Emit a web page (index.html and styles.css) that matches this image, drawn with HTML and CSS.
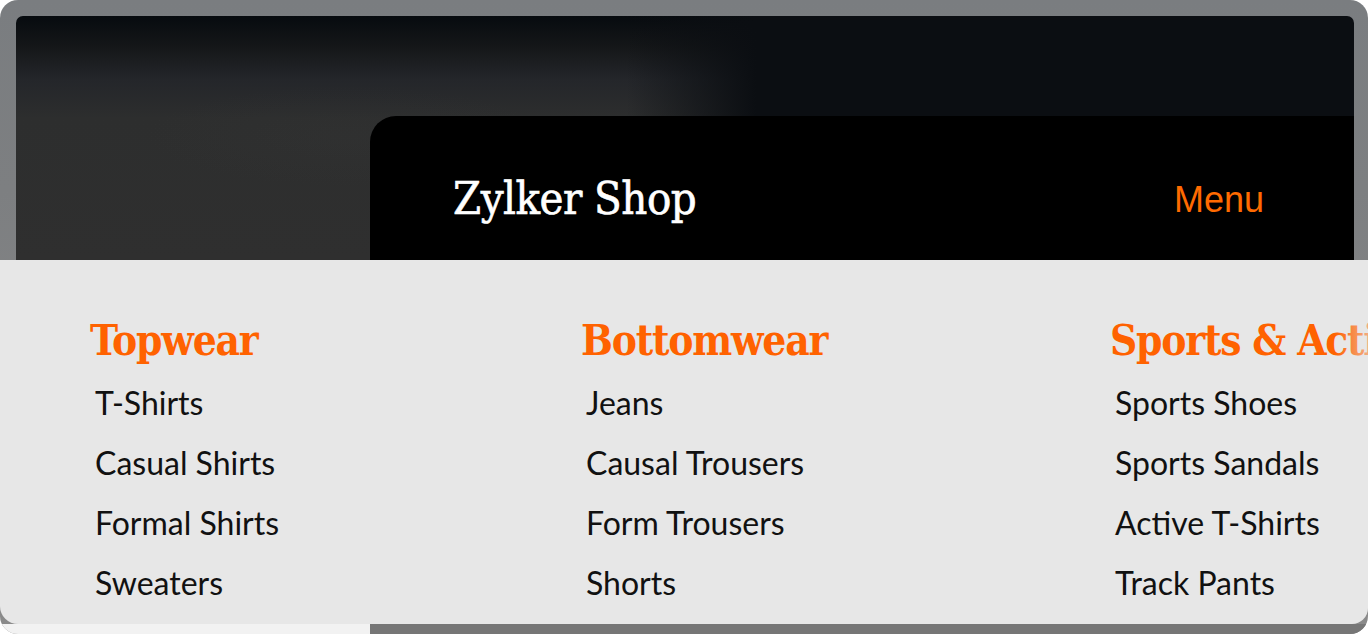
FILE: index.html
```html
<!DOCTYPE html>
<html lang="en">
<head>
<meta charset="utf-8">
<title>Zylker Shop</title>
<link rel="stylesheet" href="styles.css">
</head>
<body>
<div class="frame">
  <div class="hero">
    <header class="bar">
      <h1 class="brand">Zylker Shop</h1>
      <span class="menu">Menu</span>
    </header>
  </div>
  <section class="panel">
    <div class="col">
      <h2 class="cat">Topwear</h2>
      <ul class="items">
        <li>T-Shirts</li>
        <li>Casual Shirts</li>
        <li>Formal Shirts</li>
        <li>Sweaters</li>
      </ul>
    </div>
    <div class="col">
      <h2 class="cat">Bottomwear</h2>
      <ul class="items">
        <li>Jeans</li>
        <li>Causal Trousers</li>
        <li>Form Trousers</li>
        <li>Shorts</li>
      </ul>
    </div>
    <div class="col">
      <h2 class="cat">Sports &amp; Active Wear</h2>
      <ul class="items">
        <li>Sports Shoes</li>
        <li>Sports Sandals</li>
        <li>Active T-Shirts</li>
        <li>Track Pants</li>
      </ul>
    </div>
  </section>
  <div class="base">
    <span class="base-light"></span>
    <span class="base-dark"></span>
  </div>
</div>
</body>
</html>
```

FILE: styles.css
```css
html, body {
  margin: 0;
  padding: 0;
  background: #ffffff;
}

.frame {
  width: 1368px;
  height: 634px;
  box-sizing: border-box;
  border-radius: 18px;
  overflow: hidden;
  padding: 16px 14px 0 16px;
  display: flex;
  flex-direction: column;
  background: linear-gradient(180deg, #7a7d80 0%, #7d7f81 30%, #8a8a8a 100%);
}

.hero {
  height: 244px;
  flex: none;
  box-sizing: border-box;
  border-radius: 7px 7px 0 0;
  overflow: hidden;
  padding: 100px 0 0 354px;
  background:
    radial-gradient(ellipse 200px 50px at 330px 120px, rgba(60, 60, 60, 0.15), rgba(60, 60, 60, 0)),
    linear-gradient(90deg, rgba(10, 13, 17, 0) 0, #0b0e12 130px) 610px 0 / 100% 100px no-repeat,
    linear-gradient(180deg, #070b0f 0%, #141618 12%, #24262a 26%, #2d2e2e 42%, #2f2f2f 100%);
}

.bar {
  height: 144px;
  box-sizing: border-box;
  background: #000000;
  border-radius: 26px 0 0 0;
  display: flex;
  align-items: center;
  justify-content: space-between;
  padding: 20px 90px 0 83px;
}

.brand {
  margin: 0;
  font-family: "DejaVu Serif Condensed", "DejaVu Serif", serif;
  font-weight: normal;
  font-size: 45px;
  line-height: 1;
  color: #ffffff;
  letter-spacing: -0.5px;
  -webkit-text-stroke: 0.6px #ffffff;
}

.menu {
  font-family: "Liberation Sans", Arial, sans-serif;
  font-size: 36px;
  line-height: 1;
  color: #ff6a00;
  padding-top: 4px;
}

.panel {
  flex: none;
  height: 364px;
  box-sizing: border-box;
  margin: 0 -14px 0 -16px;
  background: #e7e7e7;
  border-radius: 0 0 16px 18px;
  display: grid;
  grid-template-columns: 491px 529px 1fr;
  padding: 56px 0 0 90px;
  position: relative;
  overflow: hidden;
}

.panel::after {
  content: "";
  position: absolute;
  top: 40px;
  right: 0;
  width: 34px;
  height: 70px;
  background: linear-gradient(90deg, rgba(231, 231, 231, 0) 0, rgba(231, 231, 231, 0.55) 100%);
}

.col {
  min-width: 0;
  white-space: nowrap;
}

.cat {
  margin: 0;
  font-family: "DejaVu Serif Condensed", "DejaVu Serif", serif;
  font-weight: bold;
  font-size: 42px;
  line-height: 50px;
  color: #ff6200;
  letter-spacing: -1.2px;
}

.items {
  list-style: none;
  margin: 0;
  padding: 7px 0 0 5px;
}

.items li {
  font-family: Lato, "Noto Sans", sans-serif;
  font-size: 32px;
  line-height: 60px;
  color: #111111;
}

.base {
  flex: none;
  height: 10px;
  margin: 0 -14px 0 -16px;
  display: flex;
}

.base-light {
  width: 370px;
  background: #f2f2f2;
}

.base-dark {
  flex: 1;
  background: #767676;
}
```
